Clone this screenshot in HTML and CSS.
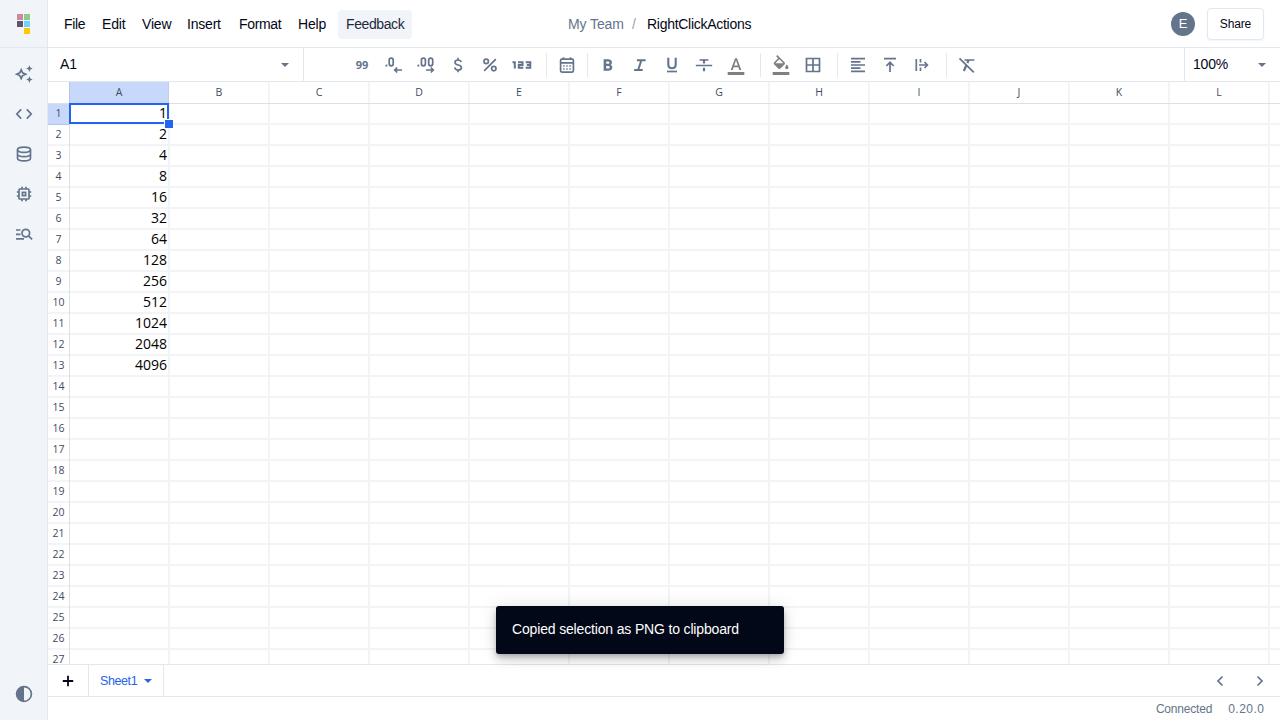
FILE: index.html
```html
<!DOCTYPE html>
<html lang="en">
<head>
<meta charset="utf-8">
<title>RightClickActions</title>
<link rel="stylesheet" href="styles.css">
</head>
<body>
<div class="app">
<aside class="sidebar">
  <div class="logo"><svg width="14" height="20" viewBox="0 0 14 20"><path fill="#cb8999" d="M0 0h6v6H0z"/><path fill="#8ecb89" d="M7 0h6v6H7z"/><path fill="#5d576b" d="M0 7h6v6H0z"/><path fill="#6cd4ff" d="M7 7h6v6H7z"/><path fill="#ffc800" d="M7 14h6v6H7z"/></svg></div>
  <nav class="side-nav">
    <span class="side-btn"><svg class="ico line" viewBox="0 0 20 20"><path d="M7.2 5.8 8.6 8.800 11.700 10.2 8.6 11.600 7.2 14.6 5.8 11.600 2.700 10.2 5.8 8.800Z"/><path class="solid" d="m15.4 1.3 1 2.3 2.3 1-2.3 1-1 2.3-1-2.3-2.3-1 2.3-1zM15.4 12.3l1 2.3 2.3 1-2.3 1-1 2.3-1-2.3-2.3-1 2.3-1z"/></svg></span>
    <span class="side-btn"><svg class="ico line" viewBox="0 0 20 20"><path d="M7.2 5.3 2.8 10l4.4 4.7M12.8 5.3l4.4 4.7-4.4 4.7"/></svg></span>
    <span class="side-btn"><svg class="ico line" viewBox="0 0 20 20"><ellipse cx="10" cy="5.8" rx="6.5" ry="2.6"/><path d="M3.5 5.8v8.5c0 1.5 2.9 2.6 6.5 2.6s6.5-1.1 6.5-2.6V5.8M3.5 10c0 1.5 2.9 2.6 6.5 2.6s6.5-1.1 6.5-2.6"/></svg></span>
    <span class="side-btn"><svg class="ico line" viewBox="0 0 20 20"><rect x="5" y="5" width="10" height="10" rx=".7"/><rect x="8.4" y="8.4" width="3.2" height="3.2"/><path d="M8 2.8V5M12 2.8V5M8 15v2.3M12 15v2.3M2.8 8H5M2.8 12H5M15 8h2.3M15 12h2.3"/></svg></span>
    <span class="side-btn"><svg class="ico line" viewBox="0 0 20 20"><path d="M2 6h4.5M2 10.400h4.5M2 14.800h8"/><circle cx="11.8" cy="9.1" r="3.8"/><path d="m14.5 11.8 3.6 3.6"/></svg></span>
  </nav>
  <span class="side-btn theme"><svg class="ico line" viewBox="0 0 20 20"><circle cx="10" cy="10" r="7.4"/><path class="solid" d="M10 2.5a7.5 7.5 0 0 0 0 15z"/></svg></span>
</aside>
<main class="main">
  <header class="topbar">
    <nav class="menu"><span class="w-file">File</span><span class="w-edit">Edit</span><span class="w-view">View</span><span class="w-insert">Insert</span><span class="w-format">Format</span><span class="w-help">Help</span><span class="feedback">Feedback</span></nav>
    <div class="crumbs"><span class="team">My Team</span><span class="slash">/</span><span class="file-name">RightClickActions</span></div>
    <div class="account"><span class="avatar">E</span><button class="share">Share</button></div>
  </header>
  <div class="toolbar">
    <div class="name-box"><span class="field">A1</span><svg class="ico" viewBox="0 -960 960 960"><path d="M480-384 288-576h384L480-384Z"/></svg></div>
    <div class="tools">
      <span class="tool"><b class="t99">99</b></span>
      <span class="tool"><svg class="ico20 line" viewBox="0 0 20 20"><circle class="solid" cx="2.4" cy="10.600" r="1.1"/><rect x="5.2" y="3.2" width="4" height="7.6" rx="2"/><path d="M10.5 15h7.5M13.2 12.5 10.7 15l2.5 2.5"/></svg></span>
      <span class="tool"><svg class="ico20 line" viewBox="0 0 20 20"><circle class="solid" cx="2.4" cy="10.600" r="1.1"/><rect x="5.4" y="3.2" width="4" height="7.6" rx="2"/><rect x="12.700" y="3.2" width="4" height="7.6" rx="2"/><path d="M10 15h7.2M14.8 12.5l2.5 2.5-2.5 2.5"/></svg></span>
      <span class="tool"><svg class="ico20 line" viewBox="0 0 20 20"><path d="M13.2 7.1C12.8 5.7 11.7 5 10.1 5 8.2 5 7 6 7 7.4c0 3.4 6.4 1.8 6.4 5.2 0 1.5-1.3 2.5-3.2 2.5-1.8 0-3.1-.9-3.6-2.5M10 2.7V5M10 15v2.3"/></svg></span>
      <span class="tool"><svg class="ico20 line" viewBox="0 0 20 20"><circle cx="6.2" cy="6.4" r="2.2"/><circle cx="13.8" cy="13.6" r="2.2"/><path d="M15.8 4.2 4.2 15.8"/></svg></span>
      <span class="tool"><svg class="ico20 line n123" viewBox="0 0 20 20"><path d="M.500 7.300h2.300v6.200M6 7.300h4.500v2.700H6.800v2.700H11.300M13.700 7.300h4.600v5.400h-4.600M14.800 10h3.500"/></svg></span>
      <i class="sep s1"></i>
      <span class="tool"><svg class="ico20 line" viewBox="0 0 20 20"><rect x="3.6" y="4.1" width="12.8" height="13" rx="1.3"/><path d="M3.6 7.8h12.8M6.5 2.2v2M13.5 2.2v2"/><path class="dots" d="M6.2 11h1.4M9.3 11h1.4M12.4 11h1.4M6.2 14h1.4M9.3 14h1.4M12.4 14h1.4"/></svg></span>
      <i class="sep s2"></i>
      <span class="tool"><svg class="ico20" viewBox="0 -960 960 960"><path d="M272-200v-560h221q65 0 120 40t55 111q0 51-23 78.500T602-491q25 11 55.500 41t30.500 90q0 89-65 124.500T501-200H272Zm121-112h104q48 0 58.500-24.500T566-372q0-11-10.500-35.500T494-432H393v120Zm0-228h93q33 0 48-17t15-38q0-24-17-39t-44-15h-95v109Z"/></svg></span>
      <span class="tool"><svg class="ico20" viewBox="0 -960 960 960"><path d="M200-195v-95h158l122-375H330v-95h420v95H580L458-290h152v95H200Z"/></svg></span>
      <span class="tool"><svg class="ico20 line" viewBox="0 0 20 20"><path d="M5 16.500h10"/><path class="u" d="M6.300 2.800v6.400c0 2.700 1.300 4.100 3.700 4.100s3.700-1.400 3.700-4.100V2.800"/></svg></span>
      <span class="tool"><svg class="ico20 line" viewBox="0 0 20 20"><path d="M1.800 10.500h16.400M5.500 5h9"/><path class="thick" d="M10 4.500v4M10 12.800v3.500"/></svg></span>
      <span class="tool gray"><svg class="ico20" viewBox="0 -960 960 960"><path d="M80 0v-144h800V0H80Zm145-240 210-570h92l210 570h-96l-46-136H367l-46 136h-96Zm170-212h172l-84-242h-4l-84 242Z"/></svg></span>
      <i class="sep s3"></i>
      <span class="tool gray"><svg class="ico20" viewBox="0 -960 960 960"><path d="m247-904 57-56 343 343q23 23 23 57t-23 57L457-313q-23 23-57 23t-57-23L153-503q-23-23-23-57t23-57l190-191-96-96Zm153 153L209-560h382L400-751Zm360 471q-33 0-56.500-23.500T680-360q0-21 12.500-45t27.500-45q9-12 19-25t21-25q11 12 21 25t19 25q15 21 27.500 45t12.500 45q0 33-23.500 56.500T760-280ZM80 0v-144h800V0H80Z"/></svg></span>
      <span class="tool"><svg class="ico20 line" viewBox="0 0 20 20"><path d="M3.500 3.500h13v13h-13zM10 3.500v13M3.500 10h13"/></svg></span>
      <i class="sep s4"></i>
      <span class="tool"><svg class="ico20 line" viewBox="0 0 20 20"><path d="M3 3.700h14M3 6.900h9.500M3 10h14M3 13.200h9.500M3 16.300h14"/></svg></span>
      <span class="tool"><svg class="ico20 line" viewBox="0 0 20 20"><path d="M4 3.700h12M10 17V7.400M6.300 11 10 7.300l3.700 3.700"/></svg></span>
      <span class="tool"><svg class="ico20 line" viewBox="0 0 20 20"><path d="M4.300 4v12M8.500 4v3.500M8.500 12.500V16M7 10h8.500M12.500 7l2.900 3-2.900 3"/></svg></span>
      <i class="sep s5"></i>
      <span class="tool"><svg class="ico20 line" viewBox="0 0 20 20"><path d="M2.500 3.300 16.800 17.400M7.500 5h9.800"/><path class="thick" d="M11.500 5 10.400 8M9.200 10.500 6.800 16"/></svg></span>
    </div>
    <div class="zoom"><span class="field">100%</span><svg class="ico" viewBox="0 -960 960 960"><path d="M480-384 288-576h384L480-384Z"/></svg></div>
  </div>
  <section class="sheet">
    <div class="corner"></div>
    <div class="cols"><span class="active">A</span><span>B</span><span>C</span><span>D</span><span>E</span><span>F</span><span>G</span><span>H</span><span>I</span><span>J</span><span>K</span><span>L</span><span></span></div>
    <div class="rows"><span class="active">1</span><span>2</span><span>3</span><span>4</span><span>5</span><span>6</span><span>7</span><span>8</span><span>9</span><span>10</span><span>11</span><span>12</span><span>13</span><span>14</span><span>15</span><span>16</span><span>17</span><span>18</span><span>19</span><span>20</span><span>21</span><span>22</span><span>23</span><span>24</span><span>25</span><span>26</span><span>27</span></div>
    <div class="cells">
      <div class="values"><span>1</span><span>2</span><span>4</span><span>8</span><span>16</span><span>32</span><span>64</span><span>128</span><span>256</span><span>512</span><span>1024</span><span>2048</span><span>4096</span></div>
      <div class="selection"><i class="handle"></i></div>
    </div>
  </section>
  <div class="tabs">
    <span class="add"><svg width="12" height="12" viewBox="0 0 12 12"><path d="M6 .8v10.400M.8 6h10.400"/></svg></span>
    <span class="tab"><span class="tab-name">Sheet1</span><svg class="ico" viewBox="0 -960 960 960"><path d="M480-384 288-576h384L480-384Z"/></svg></span>
    <span class="pager"><svg class="ico20 line" viewBox="0 0 20 20"><path d="m12.500 5.500-4.500 4.500 4.500 4.500"/></svg><svg class="ico20 line" viewBox="0 0 20 20"><path d="m7.500 5.500 4.500 4.500-4.500 4.500"/></svg></span>
  </div>
  <footer class="status"><span class="conn">Connected</span><span class="ver">0.20.0</span></footer>
</main>
<div class="toast"><span>Copied selection as PNG to clipboard</span></div>
</div>
</body>
</html>
```
FILE: styles.css
```css
* { box-sizing: border-box; }
body { margin: 0; font-family: "Liberation Sans", Arial, sans-serif; font-size: 14px; color: #020817; background: #fff; }
.app { position: relative; display: flex; width: 1280px; height: 720px; overflow: hidden; }
.sidebar { width: 48px; flex: none; display: flex; flex-direction: column; align-items: center; background: #f1f5f9; border-right: 1px solid #e2e8f0; color: #64748b; }
.logo { width: 47px; height: 48px; flex: none; padding: 14px 0 0 17px; border-bottom: 1px solid #e2e8f0; }
.logo svg { display: block; }
.side-nav { display: flex; flex-direction: column; padding-top: 6px; }
.side-btn { width: 40px; height: 40px; display: grid; place-items: center; padding-left: 1px; }
.theme { margin-top: auto; margin-bottom: 6px; }
.ico, .ico20 { width: 20px; height: 20px; display: block; fill: currentColor; flex: none; }
.line { fill: none; stroke: currentColor; stroke-width: 1.7; }
.line .solid { fill: currentColor; stroke: none; }
.line .dots { stroke-width: 1.3; }
.line .thick { stroke-width: 2.2; }
.line .u { stroke-width: 2.1; }
.n123 { stroke-width: 2; }
.main { flex: 1; min-width: 0; display: flex; flex-direction: column; }
.topbar { height: 48px; flex: none; display: grid; grid-template-columns: 520px 1fr auto; align-items: center; border-bottom: 1px solid #e2e8f0; }
.menu { display: flex; align-items: center; padding: 1px 0 0 16px; letter-spacing: -.2px; white-space: nowrap; }
.w-file { width: 38px; letter-spacing: -.3px; }
.w-edit { width: 40px; }
.w-view { width: 45px; }
.w-insert { width: 52px; }
.w-format { width: 59px; letter-spacing: -.35px; }
.w-help { width: 40px; }
.feedback { width: 74px; height: 29px; line-height: 28px; padding-left: 8px; background: #f1f5f9; border-radius: 4px; letter-spacing: -.4px; color: #1e293b; }
.crumbs { display: flex; white-space: nowrap; }
.team { width: 64px; color: #64748b; letter-spacing: -.1px; }
.slash { width: 15px; color: #94a3b8; }
.file-name { letter-spacing: -.28px; }
.account { display: flex; align-items: center; gap: 12px; padding-right: 16px; }
.avatar { width: 24px; height: 24px; border-radius: 50%; background: #64748b; color: #fff; text-align: center; line-height: 24px; font-size: 13px; }
.share { width: 57px; height: 32px; margin-top: 1px; padding: 0; background: #fff; border: 1px solid #e2e8f0; border-radius: 4px; box-shadow: 0 1px 2px #0000000d; font: 12px "Liberation Sans", Arial, sans-serif; letter-spacing: -.15px; color: #020817; }
.toolbar { height: 34px; flex: none; display: flex; border-bottom: 1px solid #e2e8f0; }
.name-box { width: 256px; display: flex; align-items: center; justify-content: space-between; padding: 0 8px 0 12px; border-right: 1px solid #e2e8f0; }
.field { padding-bottom: 1px; letter-spacing: -.2px; }
.name-box .ico, .zoom .ico { color: #64748b; }
.tools { flex: 1; display: flex; align-items: center; padding-left: 42px; color: #64748b; }
.tool { width: 32px; height: 32px; display: grid; place-items: center; }
.tool.gray { color: #808080; }
.t99 { font: 700 11px "Open Sans", sans-serif; line-height: 14px; }
.sep { width: 1px; height: 24px; background: #e2e8f0; }
.s1, .s3, .s4, .s5 { margin: 0 4px 0 8px; }
.s2 { margin: 0 4px; }
.zoom { width: 96px; display: flex; align-items: center; justify-content: space-between; padding: 0 8px; border-left: 1px solid #e2e8f0; }
.sheet { flex: 1; min-height: 0; display: grid; grid-template: 21px minmax(0, 1fr) / 22px minmax(0, 1fr); overflow: hidden; font-family: "Open Sans", sans-serif; font-size: 10.5px; color: #3f4b5e; }
.cols { display: flex; }
.cols span { width: 100px; flex: none; text-align: center; line-height: 21px; border-right: 2px solid #f3f4f5; }
.cols .active { background: #c8d8fb; border-right: 1px solid #c2cee8; box-shadow: -1px 0 #b5c5ea; width: 99px; margin-right: 1px; }
.rows { overflow: hidden; border-right: 1px solid #dddfe1; border-top: 1px solid #dddfe1; }
.rows span { display: block; height: 21px; line-height: 19px; text-align: center; border-bottom: 2px solid #f3f4f5; }
.rows .active { background: #c8d8fb; border-bottom: 1px solid #b5c5ea; }
.cells { position: relative; border-top: 1px solid #dddfe1; background: repeating-linear-gradient(90deg, transparent 0 98px, #f3f4f5 98px 100px), repeating-linear-gradient(180deg, transparent 0 19px, #f3f4f5 19px 21px); }
.values { width: 97px; margin-top: -1px; text-align: right; color: #000; font-size: 14px; }
.values span { display: block; height: 21px; line-height: 19px; }
.selection { position: absolute; left: -1px; top: -1px; width: 100px; height: 21px; border: 2px solid #2463eb; }
.handle { position: absolute; right: -6px; bottom: -6px; width: 9px; height: 9px; background: #2463eb; border: solid #fff; border-width: 1px 0 0 1px; }
.tabs { height: 33px; flex: none; display: flex; border-top: 1px solid #e2e8f0; }
.add { width: 41px; display: grid; place-items: center; padding-top: 1px; border-right: 1px solid #e2e8f0; border-bottom: 1px solid #e2e8f0; }
.add svg { stroke: #020817; stroke-width: 1.8; }
.tab { width: 75px; display: flex; align-items: center; padding: 1px 0 0 11px; gap: 1px; color: #2463eb; border-right: 1px solid #e2e8f0; border-bottom: 1px solid #e2e8f0; font-size: 12.5px; }
.tab-name { width: 37px; letter-spacing: -.4px; }
.pager { flex: 1; display: flex; align-items: center; justify-content: flex-end; gap: 20px; padding: 1px 10px 0 0; color: #64748b; border-bottom: 1px solid #e2e8f0; }
.status { height: 23px; flex: none; display: flex; justify-content: flex-end; align-items: center; gap: 16px; padding: 1px 16px 0 0; font-size: 12px; color: #64748b; }
.conn { letter-spacing: -.2px; }
.ver { letter-spacing: .5px; margin-right: -.5px; }
.toast { position: absolute; left: 496px; top: 606px; width: 288px; height: 48px; padding-left: 16px; line-height: 47px; background: #020817; border-radius: 3px; color: #fff; letter-spacing: -.16px; box-shadow: 0 3px 5px -1px #0003, 0 6px 10px #00000024, 0 1px 18px #0000001f; }
```
